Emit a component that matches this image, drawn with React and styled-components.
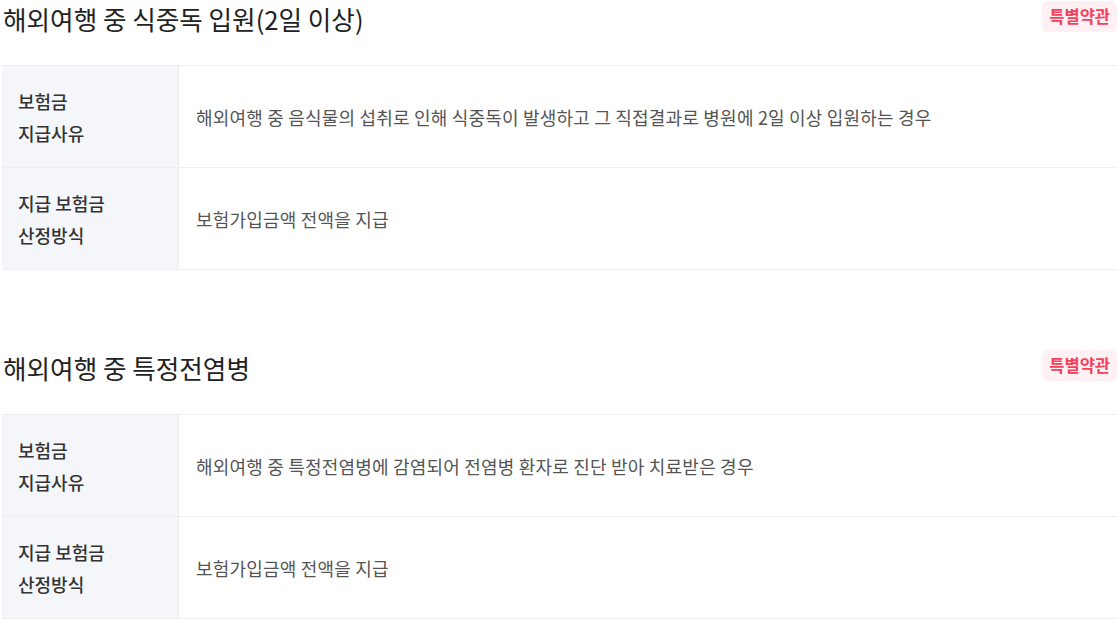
import styled, { createGlobalStyle } from "styled-components";

const GlobalStyle = createGlobalStyle`
  body {
    margin: 0;
    background: #fff;
    font-family: "Noto Sans CJK KR", "Noto Sans", sans-serif;
  }
`;

const sections = [
  {
    title: "해외여행 중 식중독 입원(2일 이상)",
    rows: [
      {
        label: ["보험금", "지급사유"],
        text: "해외여행 중 음식물의 섭취로 인해 식중독이 발생하고 그 직접결과로 병원에 2일 이상 입원하는 경우",
      },
      { label: ["지급 보험금", "산정방식"], text: "보험가입금액 전액을 지급" },
    ],
  },
  {
    title: "해외여행 중 특정전염병",
    rows: [
      {
        label: ["보험금", "지급사유"],
        text: "해외여행 중 특정전염병에 감염되어 전염병 환자로 진단 받아 치료받은 경우",
      },
      { label: ["지급 보험금", "산정방식"], text: "보험가입금액 전액을 지급" },
    ],
  },
];

const App = () => {
  return (
    <Page>
      <GlobalStyle />
      {sections.map((s) => (
        <Section key={s.title}>
          <Header>
            <Title>{s.title}</Title>
            <Badge>특별약관</Badge>
          </Header>
          <Table>
            {s.rows.map((r, i) => (
              <Row key={i}>
                <Label>
                  {r.label.map((l) => (
                    <span key={l}>{l}</span>
                  ))}
                </Label>
                <Cell>{r.text}</Cell>
              </Row>
            ))}
          </Table>
        </Section>
      ))}
    </Page>
  );
};

const Page = styled.div`
  padding: 0 1px 0 2px;
  display: flex;
  flex-direction: column;
  gap: 79px;
`;

const Section = styled.section`
  display: flex;
  flex-direction: column;
  gap: 23px;
`;

const Header = styled.div`
  height: 42px;
  display: flex;
  align-items: center;
  justify-content: space-between;
`;

const Title = styled.h2`
  margin: -5px 0 0 1px;
  font-size: 25.6px;
  font-weight: 400;
  color: #222;
`;

const Badge = styled.span`
  background: #fff1f3;
  color: #f5405a;
  font-size: 16.5px;
  font-weight: 700;
  line-height: 31px;
  padding: 0 7px;
  border-radius: 6px;
  margin-top: -10px;
`;

const Table = styled.div`
  border-top: 1px solid #eceef2;
`;

const Row = styled.div`
  display: grid;
  grid-template-columns: 177px 1fr;
  height: 101px;
  border-bottom: 1px solid #eceef2;
`;

const Label = styled.div`
  background: #f5f6fa;
  border-right: 1px solid #eceef2;
  display: flex;
  flex-direction: column;
  justify-content: center;
  padding-left: 16px;
  font-size: 18px;
  font-weight: 500;
  line-height: 32px;
  color: #333;
`;

const Cell = styled.div`
  display: flex;
  align-items: center;
  padding-left: 17px;
  font-size: 18px;
  letter-spacing: 0.2px;
  color: #555;
`;

export default App;
